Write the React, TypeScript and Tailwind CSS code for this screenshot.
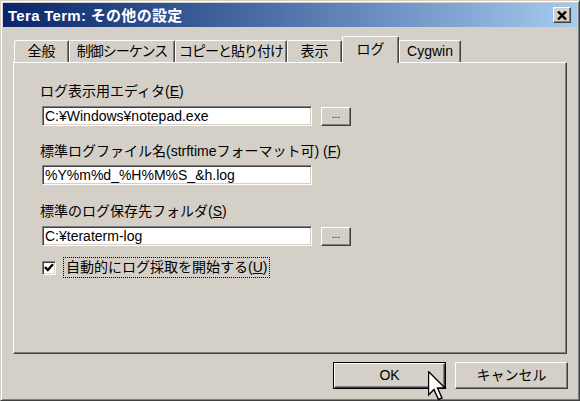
import type { ReactNode } from "react";

const FONT = "font-['Liberation_Sans','Noto_Sans_CJK_JP',sans-serif]";

const RAISED =
  "border border-t-white border-l-white border-r-[#404040] border-b-[#404040] shadow-[inset_-1px_-1px_0_#808080] bg-[#d4d0c8]";
const SUNKEN =
  "border border-t-[#808080] border-l-[#808080] border-r-white border-b-white shadow-[inset_1px_1px_0_#404040,inset_-1px_-1px_0_#d4d0c8] bg-white";

type Tab = { label: string; width: string; tight?: boolean; active?: boolean };

const TABS: Tab[] = [
  { label: "全般", width: "w-[55px]" },
  { label: "制御シーケンス", width: "w-[106px]", tight: true },
  { label: "コピーと貼り付け", width: "w-[112px]", tight: true },
  { label: "表示", width: "w-[55px]" },
  { label: "ログ", width: "w-[57px]", active: true },
  { label: "Cygwin", width: "w-[62px]" },
];

const Label = ({ children, className = "" }: { children: ReactNode; className?: string }) => (
  <div className={`h-[16px] leading-[16px] text-[14px] whitespace-nowrap ${className}`}>{children}</div>
);

const TextBox = ({ value }: { value: string }) => (
  <div className={`ml-[2px] flex h-[20px] w-[270px] items-center overflow-hidden pl-[2px] text-[14px] leading-none whitespace-nowrap ${SUNKEN}`}>
    {value}
  </div>
);

const BrowseButton = () => (
  <div className={`ml-[9px] flex h-[19px] w-[30px] items-center justify-center pb-[2px] text-[10px] leading-none ${RAISED}`}>
    ...
  </div>
);

const Cursor = () => (
  <svg className="absolute top-[370px] left-[427px]" width="19" height="30" viewBox="0 0 19 30">
    <polygon
      points="0.5,0.5 0.5,24 6,18.5 10.5,28.5 14,27 9.5,17 17,17"
      fill="white"
      stroke="black"
      strokeWidth="1.4"
      strokeLinejoin="miter"
    />
  </svg>
);

export default function App() {
  return (
    <div
      className={`relative flex h-[401px] w-[580px] flex-col border border-t-[#d4d0c8] border-r-[#404040] border-b-[#404040] border-l-[#d4d0c8] bg-[#d4d0c8] p-[2px] text-black shadow-[inset_1px_1px_0_white,inset_-1px_-1px_0_#808080] ${FONT}`}
    >
      {/* title bar */}
      <div className="flex h-[24px] shrink-0 items-center justify-between bg-linear-to-r from-[#0a246a] to-[#a6caf0] pr-[6px] pl-[5px]">
        <span className="text-[15px] leading-none font-bold tracking-[0.3px] text-white">Tera Term: その他の設定</span>
        <div className={`flex h-[16px] w-[18px] items-center justify-center ${RAISED}`}>
          <svg width="10" height="9" viewBox="0 0 10 9">
            <path d="M1 0.5 L9 8.5 M9 0.5 L1 8.5" stroke="black" strokeWidth="2.4" />
          </svg>
        </div>
      </div>

      {/* tabs */}
      <div className="mt-[9px] flex h-[26px] shrink-0 items-end pl-[11px]">
        {TABS.map((tab) =>
          tab.active ? (
            <div
              key={tab.label}
              className={`relative z-10 -mb-[1px] flex h-[27px] items-center justify-center rounded-t-[2px] border-t border-r border-l border-t-white border-r-[#404040] border-l-white bg-[#d4d0c8] pb-[1px] text-[14px] shadow-[inset_-1px_0_0_#808080] ${tab.width}`}
            >
              {tab.label}
            </div>
          ) : (
            <div
              key={tab.label}
              className={`flex h-[22px] items-center justify-center rounded-t-[2px] border-t border-r border-l border-t-white border-r-[#404040] border-l-white text-[14px] whitespace-nowrap shadow-[inset_-1px_0_0_#808080] ${tab.width} ${tab.tight ? "tracking-[-1px]" : ""}`}
            >
              {tab.label}
            </div>
          ),
        )}
      </div>

      {/* panel */}
      <div className={`mx-[10px] h-[292px] shrink-0 pt-[20px] pl-[26px] ${RAISED}`}>
        <Label>
          ログ表示用エディタ(<u>E</u>)
        </Label>
        <div className="mt-[7px] flex items-center">
          <TextBox value="C:¥Windows¥notepad.exe" />
          <BrowseButton />
        </div>

        <Label className="mt-[17px]">
          標準ログファイル名(strftimeフォーマット可) (<u>F</u>)
        </Label>
        <div className="mt-[6px] flex items-center">
          <TextBox value="%Y%m%d_%H%M%S_&h.log" />
        </div>

        <Label className="mt-[18px]">
          標準のログ保存先フォルダ(<u>S</u>)
        </Label>
        <div className="mt-[7px] flex items-center">
          <TextBox value="C:¥teraterm-log" />
          <BrowseButton />
        </div>

        <div className="mt-[11px] flex h-[21px] items-center">
          <div className={`ml-[2px] flex h-[14px] w-[14px] items-center justify-center ${SUNKEN}`}>
            <svg width="10" height="9" viewBox="0 0 10 9">
              <path d="M1 4 L3.8 7 L9 1.2" fill="none" stroke="black" strokeWidth="2.4" />
            </svg>
          </div>
          <div className="ml-[7px] flex h-[21px] items-center border border-dotted border-black px-[2px] text-[14px] whitespace-nowrap">
            自動的にログ採取を開始する(<u>U</u>)
          </div>
        </div>
      </div>

      {/* dialog buttons */}
      <div className="mt-[8px] flex justify-end gap-[9px] pr-[9px]">
        <div className="h-[27px] w-[113px] border border-black">
          <div className={`flex h-full w-full items-center justify-center text-[14px] ${RAISED}`}>OK</div>
        </div>
        <div className={`flex h-[27px] w-[113px] items-center justify-center text-[14px] ${RAISED}`}>キャンセル</div>
      </div>

      <Cursor />
    </div>
  );
}
